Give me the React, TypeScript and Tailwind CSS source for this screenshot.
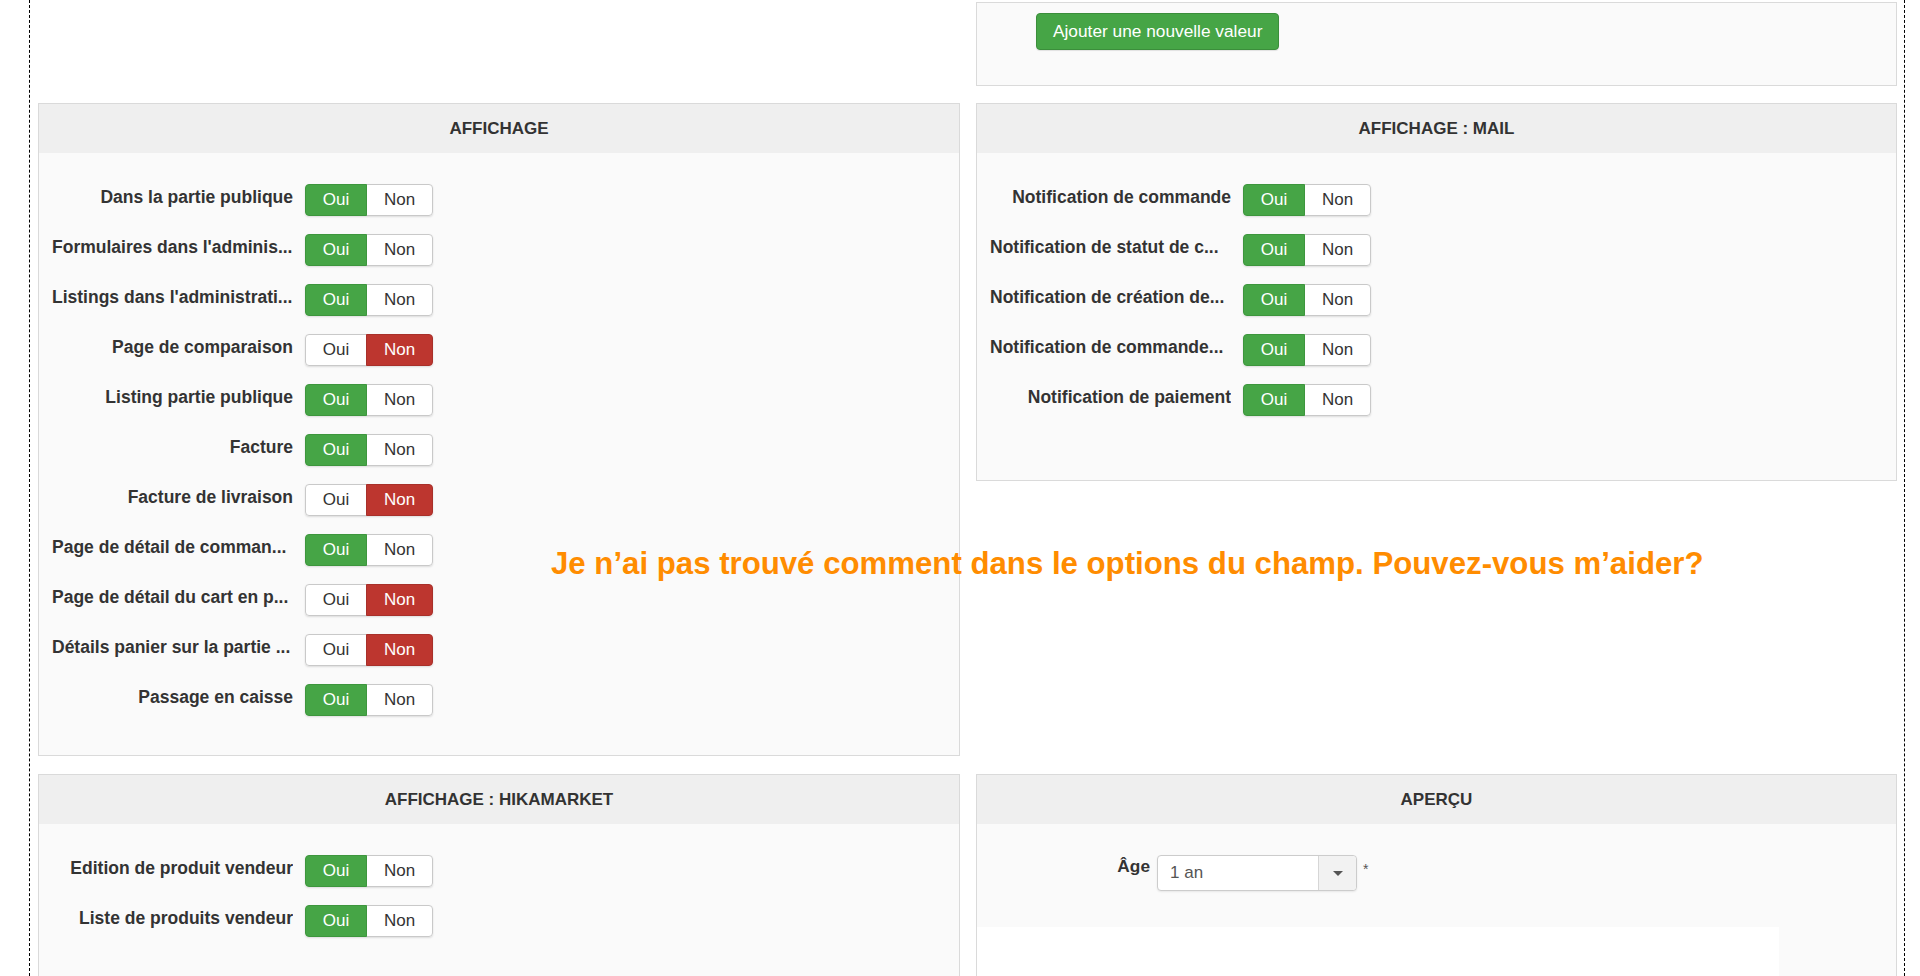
import type { ReactNode } from 'react';

type Option = { label: string; on: boolean };

const affichage: Option[] = [
  { label: 'Dans la partie publique', on: true },
  { label: "Formulaires dans l'adminis...", on: true },
  { label: "Listings dans l'administrati...", on: true },
  { label: 'Page de comparaison', on: false },
  { label: 'Listing partie publique', on: true },
  { label: 'Facture', on: true },
  { label: 'Facture de livraison', on: false },
  { label: 'Page de détail de comman...', on: true },
  { label: 'Page de détail du cart en p...', on: false },
  { label: 'Détails panier sur la partie ...', on: false },
  { label: 'Passage en caisse', on: true },
];

const mail: Option[] = [
  { label: 'Notification de commande', on: true },
  { label: 'Notification de statut de c...', on: true },
  { label: 'Notification de création de...', on: true },
  { label: 'Notification de commande...', on: true },
  { label: 'Notification de paiement', on: true },
];

const hikamarket: Option[] = [
  { label: 'Edition de produit vendeur', on: true },
  { label: 'Liste de produits vendeur', on: true },
];

// Oui / Non radio group, green when yes, red when no
function YesNo({ on }: { on: boolean }) {
  return (
    <div className="flex h-[32px] shrink-0 rounded-[4px] text-[17px] shadow-[0_1px_2px_rgba(0,0,0,0.12)]">
      <span
        className={
          on
            ? 'relative z-10 flex w-[62px] items-center justify-center rounded-l-[4px] border border-[#3d963d] bg-[#46a546] text-white'
            : 'flex w-[62px] items-center justify-center rounded-l-[4px] border border-[#c9c9c9] bg-white text-[#333]'
        }
      >
        Oui
      </span>
      <span
        className={
          on
            ? '-ml-px flex w-[67px] items-center justify-center rounded-r-[4px] border border-[#c9c9c9] bg-white text-[#333]'
            : 'relative z-10 -ml-px flex w-[67px] items-center justify-center rounded-r-[4px] border border-[#a8302a] bg-[#bd362f] text-white'
        }
      >
        Non
      </span>
    </div>
  );
}

function Panel({ title, className, children }: { title: string; className?: string; children: ReactNode }) {
  return (
    <section className={`border border-[#dadada] bg-[#fafafa] ${className ?? ''}`}>
      <h3 className="flex h-[49px] items-center justify-center bg-[#efefef] text-[17px] font-bold text-[#333]">
        {title}
      </h3>
      {children}
    </section>
  );
}

function OptionList({ rows }: { rows: Option[] }) {
  return (
    <div className="flex flex-col gap-[18px] pl-[13px]">
      {rows.map((row) => (
        <div key={row.label} className="flex h-[32px] items-start gap-[12px]">
          {/* shortened labels fill the column from the left, the others hug the switch */}
          <label
            className={
              row.label.endsWith('...')
                ? 'w-[241px] shrink-0 overflow-hidden text-left text-[17.5px] leading-[26px] font-bold whitespace-nowrap text-[#333]'
                : 'w-[241px] shrink-0 overflow-hidden text-right text-[17.5px] leading-[26px] font-bold whitespace-nowrap text-[#333]'
            }
          >
            {row.label}
          </label>
          <YesNo on={row.on} />
        </div>
      ))}
    </div>
  );
}

export default function App() {
  return (
    <div className="relative h-[976px] w-[1920px] overflow-hidden bg-white font-['Liberation_Sans',Arial,sans-serif]">
      <div className="ml-[29px] h-full w-[1876px] border-x border-dashed border-black pr-[7px] pl-[8px]">
        <div className="grid grid-cols-[922px_921px] items-start gap-x-4">
          <div />
          <div className="mt-[2px] h-[84px] border border-[#dadada] bg-[#fafafa] pt-[10px] pl-[59px]">
            <button className="h-[37px] rounded-[4px] border border-[#3b8e3b] bg-[#46a546] px-[16px] text-[17.3px] text-white shadow-[0_1px_1px_rgba(0,0,0,0.1)]">
              Ajouter une nouvelle valeur
            </button>
          </div>

          <Panel title="AFFICHAGE" className="mt-[17px]">
            <div className="pt-[31px] pb-[39px]">
              <OptionList rows={affichage} />
            </div>
          </Panel>

          <Panel title="AFFICHAGE : MAIL" className="mt-[17px]">
            <div className="pt-[31px] pb-[64px]">
              <OptionList rows={mail} />
            </div>
          </Panel>

          <Panel title="AFFICHAGE : HIKAMARKET" className="mt-[18px]">
            <div className="pt-[31px] pb-[80px]">
              <OptionList rows={hikamarket} />
            </div>
          </Panel>

          <Panel title="APERÇU" className="mt-[18px]">
            <div className="pt-[31px] pb-[60px]">
              <div className="flex items-start pl-[13px]">
                <label className="w-[160px] text-right text-[17.3px] leading-[22px] font-bold text-[#333]">Âge</label>
                <div className="ml-[7px] flex h-[36px] w-[200px] rounded-[4px] border border-[#cccccc] bg-white shadow-[0_1px_2px_rgba(0,0,0,0.08)]">
                  <span className="flex flex-1 items-center pl-[12px] text-[17px] text-[#555]">1 an</span>
                  <span className="flex w-[38px] items-center justify-center rounded-r-[4px] border-l border-[#d6d6d6] bg-[#f2f2f2]">
                    <span className="h-0 w-0 border-x-[5px] border-t-[5px] border-x-transparent border-t-[#555]" />
                  </span>
                </div>
                <span className="mt-[3px] ml-[6px] text-[14px] leading-[22px] text-[#555]">*</span>
              </div>
              <div className="mt-[36px] h-[120px] w-[802px] bg-white" />
            </div>
          </Panel>
        </div>
      </div>

      {/* question overlaid on the form */}
      <p className="absolute top-[546px] left-[551px] text-[31.2px] leading-[36px] font-bold whitespace-nowrap text-[#ff8c00]">
        Je n’ai pas trouvé comment dans le options du champ. Pouvez-vous m’aider?
      </p>
    </div>
  );
}
